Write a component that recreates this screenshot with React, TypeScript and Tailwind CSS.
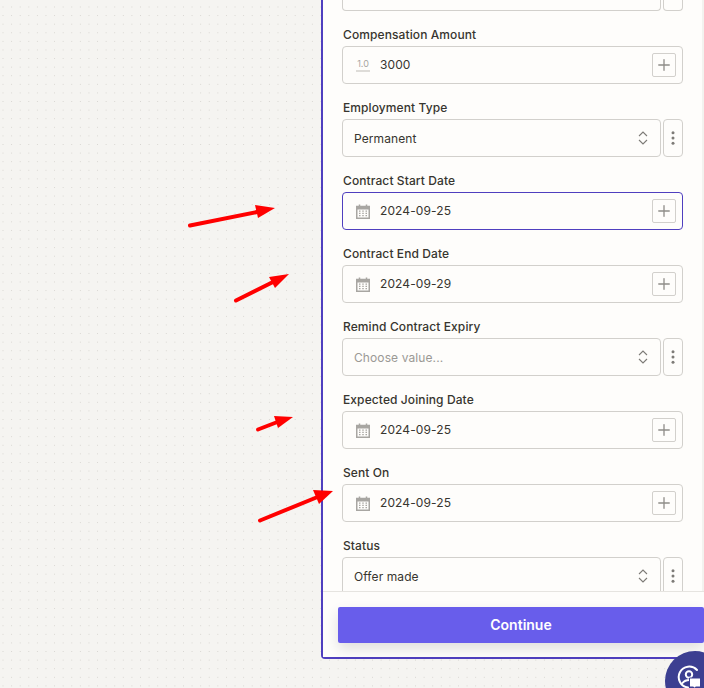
import React from 'react';
import { Plus } from 'lucide-react';

const CalendarIcon = () => (
  <svg width="14" height="15" viewBox="0 0 14 15" className="shrink-0 text-[#a8a6a2]" fill="none">
    <rect x="0.75" y="2.5" width="12.5" height="11.75" stroke="currentColor" strokeWidth="1.5" />
    <rect x="0.75" y="2.5" width="12.5" height="2.5" fill="currentColor" stroke="currentColor" strokeWidth="1" />
    <path d="M3.5 0.5v3M10.5 0.5v3" stroke="currentColor" strokeWidth="1.5" />
    <path
      d="M3 7h1.5M6.25 7h1.5M9.5 7h1.5M3 9.25h1.5M6.25 9.25h1.5M9.5 9.25h1.5M3 11.5h1.5M6.25 11.5h1.5M9.5 11.5h1.5"
      stroke="currentColor"
      strokeWidth="1.25"
    />
  </svg>
);

const NumberIcon = () => (
  <span className="flex w-[14px] shrink-0 flex-col items-center border-b-2 border-[#dedcd8] pb-px text-[9px] leading-[10px] text-[#a8a6a2]">
    1.0
  </span>
);

const PlusBox = () => (
  <span className="flex h-6 w-6 shrink-0 items-center justify-center rounded-[2px] border border-[#d2d0cc] text-[#8f8d89]">
    <Plus size={18} strokeWidth={1.75} />
  </span>
);

const SelectArrows = () => (
  <svg width="10" height="14" viewBox="0 0 10 14" fill="none" stroke="#7d7b77" strokeWidth="1.1" className="mr-[2px] shrink-0">
    <path d="M1 5L5 1l4 4M1 9l4 4 4-4" />
  </svg>
);

const MoreDots = () => (
  <svg width="4" height="14" viewBox="0 0 4 14" fill="#7d7b77">
    <circle cx="2" cy="1.75" r="1.5" />
    <circle cx="2" cy="7" r="1.5" />
    <circle cx="2" cy="12.25" r="1.5" />
  </svg>
);

const FieldLabel = ({ children }: { children: string }) => (
  <label className="mb-px h-[20px] pl-px text-xs leading-[20px] font-medium tracking-[0.1px] text-[#37352f]">{children}</label>
);

const InputField = ({ label, value, icon, focused }: { label: string; value: string; icon: React.ReactNode; focused?: boolean }) => (
  <div className="flex flex-col">
    <FieldLabel>{label}</FieldLabel>
    <div
      className={`flex h-[38px] items-center gap-[10px] rounded-[4px] border bg-[#fefdfb] pr-[6px] pl-[13px] ${
        focused ? 'border-[#4f3fbf]' : 'border-[#d2d0cc]'
      }`}
    >
      {icon}
      <span className="flex-1 text-xs tracking-[0.1px] text-[#37352f]">{value}</span>
      <PlusBox />
    </div>
  </div>
);

const SelectField = ({ label, value, placeholder }: { label: string; value: string; placeholder?: boolean }) => (
  <div className="flex flex-col">
    <FieldLabel>{label}</FieldLabel>
    <div className="flex h-[38px] gap-[2px]">
      <div className="flex flex-1 items-center rounded-[4px] border border-[#d2d0cc] bg-[#fefdfb] pr-[10px] pl-[11px]">
        <span className={`flex-1 pt-px text-xs tracking-[0.1px] ${placeholder ? 'text-[#9b9995]' : 'text-[#37352f]'}`}>{value}</span>
        <SelectArrows />
      </div>
      <div className="flex w-5 items-center justify-center rounded-[4px] border border-[#d2d0cc]">
        <MoreDots />
      </div>
    </div>
  </div>
);

const Arrows = () => (
  <svg width="704" height="688" viewBox="0 0 704 688" className="pointer-events-none absolute top-0 left-0" fill="#ff0000" stroke="none">
    <path d="M190 225.5L262 211" stroke="#ff0000" strokeWidth="4" strokeLinecap="round" />
    <polygon points="275,208 255,205 258,218" />
    <path d="M236 300.5L275 281" stroke="#ff0000" strokeWidth="4" strokeLinecap="round" />
    <polygon points="289,274 269,277 275,288" />
    <path d="M258 429.5L280 421" stroke="#ff0000" strokeWidth="4" strokeLinecap="round" />
    <polygon points="293,417 274,416 278,428" />
    <path d="M260 520.5L320 496" stroke="#ff0000" strokeWidth="4" strokeLinecap="round" />
    <polygon points="333,491 313,490 319,504" />
  </svg>
);

export default function App() {
  return (
    <div className="relative h-[688px] w-[704px] overflow-hidden bg-[#f5f4f1] bg-[radial-gradient(#d8d6d1_0.5px,transparent_0.7px)] bg-[length:8.6px_8.6px] bg-[position:-1.3px_2.7px] pl-[321px] font-['Inter',sans-serif]">
      {/* Panel */}
      <div className="flex h-[659px] w-[383px] flex-col rounded-bl-[4px] border-b-2 border-l-2 border-[#4f3fbf] bg-[#fefdfb]">
        <div className="flex flex-1 flex-col justify-end gap-[14px] overflow-hidden border-r-2 border-[#f3f2ef] pr-[19px] pl-[19px]">
          <div className="flex h-[11px] gap-[2px]">
            <div className="flex-1 rounded-b-[4px] border-x border-b border-[#d2d0cc]" />
            <div className="w-5 rounded-b-[4px] border-x border-b border-[#d2d0cc]" />
          </div>
          <InputField label="Compensation Amount" value="3000" icon={<NumberIcon />} />
          <SelectField label="Employment Type" value="Permanent" />
          <InputField label="Contract Start Date" value="2024-09-25" icon={<CalendarIcon />} focused />
          <InputField label="Contract End Date" value="2024-09-29" icon={<CalendarIcon />} />
          <SelectField label="Remind Contract Expiry" value="Choose value..." placeholder />
          <InputField label="Expected Joining Date" value="2024-09-25" icon={<CalendarIcon />} />
          <InputField label="Sent On" value="2024-09-25" icon={<CalendarIcon />} />
          <div className="-mb-px h-[56px]">
            <SelectField label="Status" value="Offer made" />
          </div>
        </div>
        {/* Footer */}
        <div className="relative h-[66px] shrink-0 border-t border-[#e6e4e0] bg-[#fefdfb] pt-[15px] pl-[15px]">
          <button className="flex h-9 w-[366px] items-center justify-center rounded-[2px] bg-[#685deb] text-sm font-semibold text-white shadow-[0_6px_14px_rgba(0,0,0,0.12)]">
            Continue
          </button>
        </div>
      </div>

      <Arrows />

      {/* Chat bubble */}
      <div className="absolute top-[651px] left-[665px] h-[60px] w-[60px] rounded-full bg-[#3c3f91] pt-[14px] pl-[12px]">
        <svg width="24" height="24" viewBox="0 0 24 24" fill="none" stroke="#ffffff" strokeWidth="2">
          <path d="M20 5A10.5 10.5 0 1 0 11 22.5" strokeLinecap="round" />
          <circle cx="12" cy="9.5" r="3.2" />
          <path d="M5.5 18c1.5-2 4-3 7-3" strokeLinecap="round" />
          <path d="M12.5 13h11v9h-5l-2 2v-2h-4z" fill="#ffffff" stroke="#3c3f91" strokeWidth="1" />
        </svg>
      </div>
    </div>
  );
}
